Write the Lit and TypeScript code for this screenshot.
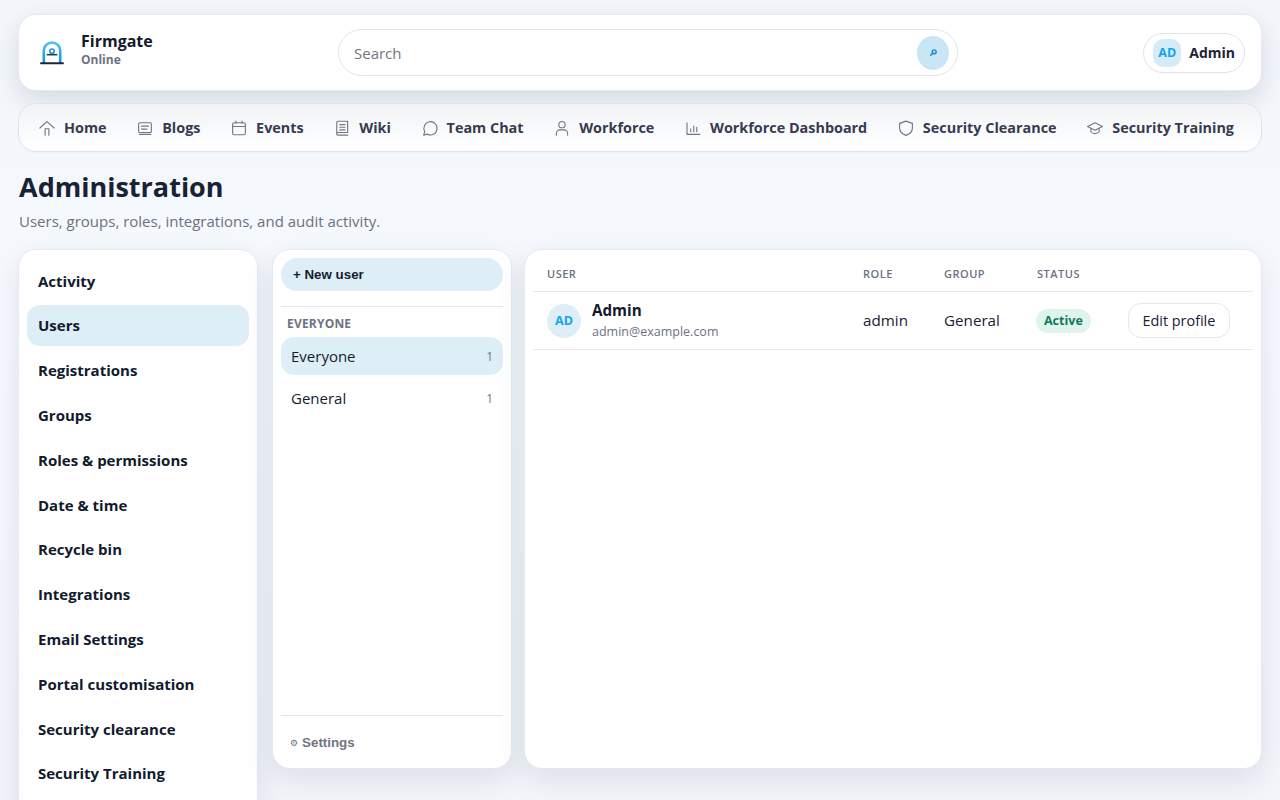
import { LitElement, html, css, svg } from "lit";
import { customElement } from "lit/decorators.js";

const ic = (p: unknown, sw = 1.5) => html`<svg class="ico" viewBox="0 0 24 24" fill="none" stroke="currentColor" stroke-width=${sw} stroke-linecap="round" stroke-linejoin="round">${p}</svg>`;

const navItems: [string, unknown][] = [
  ["Home", ic(svg`<path d="M2.500 12 12 3.500l9.500 8.500"/><path d="M9.500 21.500V13h5v8.500"/>`)],
  ["Blogs", ic(svg`<rect x="3.500" y="5" width="17" height="13" rx="1.500"/><path d="M7.500 9.500h9M7.500 13.500h7M4.500 20.500h15"/>`)],
  ["Events", ic(svg`<rect x="3.500" y="5" width="17" height="16" rx="2"/><path d="M3.500 10h17M8 2.800v3M16 2.800v3"/>`)],
  ["Wiki", ic(svg`<path d="M5 20V4.500A1.500 1.500 0 0 1 6.500 3H19.500v15H7A2 2 0 0 0 5 20a1.500 1.500 0 0 0 1.500 1.500h13"/><path d="M9 7.500h7M9 11h7M9 14.500h7"/>`)],
  ["Team Chat", ic(svg`<path d="M3.500 21.500l1.500-4.800A8.800 8.800 0 1 1 8.600 20.200Z"/>`)],
  ["Workforce", ic(svg`<circle cx="12" cy="7.500" r="4.200"/><path d="M4.500 21.500v-2a5 5 0 0 1 5-5h5a5 5 0 0 1 5 5v2"/>`)],
  ["Workforce Dashboard", ic(svg`<path d="M4 5v15.500h17"/><path d="M9 17v-3.500M13 17V9.500M17 17v-6"/>`)],
  ["Security Clearance", ic(svg`<path d="M12 2.800l8.500 3v6.500c0 4.500-3.500 7.700-8.500 9.500-5-1.800-8.500-5-8.500-9.500V5.800Z"/>`)],
  ["Security Training", ic(svg`<path d="M2 10 12 5l10 5-10 5Z"/><path d="M6.500 13v4c1.500 1.800 3.300 2.500 5.500 2.500s4-.7 5.500-2.500v-4"/>`)],
];

const sideItems = ["Activity", "Users", "Registrations", "Groups", "Roles & permissions", "Date & time", "Recycle bin", "Integrations", "Email Settings", "Portal customisation", "Security clearance", "Security Training"];

@customElement("app-root")
export class AppRoot extends LitElement {
  static styles = css`
    :host {
      display: block;
      height: 800px;
      overflow: hidden;
      box-sizing: border-box;
      padding: 14px 18px 0;
      font-family: "Open Sans", sans-serif;
      color: #151c2e;
      background: linear-gradient(180deg, #f2f6fb 0%, #f6f9fe 40%, #f2f5fa 100%);
    }
    * { box-sizing: border-box; }
    .card {
      background: #fff;
      border: 1px solid #e6e8ef;
      border-radius: 18px;
      box-shadow: 0 10px 30px rgba(24, 34, 60, 0.1);
    }
    .top {
      height: 77px;
      display: grid;
      grid-template-columns: 300px 620px 1fr;
      align-items: center;
      padding: 0 16px 0 19px;
      box-shadow: 0 10px 24px rgba(24, 34, 60, 0.13);
    }
    .brand { display: flex; align-items: center; gap: 15px; }
    .logo { width: 28px; height: 28px; flex: none; }
    .brand-text { padding-bottom: 5px; }
    .brand-name { font-size: 16px; font-weight: 700; line-height: 20px; color: #111a2e; }
    .brand-sub { font-size: 12px; font-weight: 700; line-height: 18px; color: #6d7283; }
    .search {
      height: 47px;
      border: 1px solid #e2e4ec;
      border-radius: 24px;
      display: flex;
      align-items: center;
      justify-content: space-between;
      padding: 0 8px 0 15px;
      font-size: 15px;
      color: #72757f;
    }
    .search-btn {
      width: 32px;
      height: 34px;
      border-radius: 50%;
      background: #c8e6f6;
      display: flex;
      align-items: center;
      justify-content: center;
    }
    .search-btn svg { width: 7px; height: 7px; }
    .user {
      justify-self: end;
      height: 40px;
      display: flex;
      align-items: center;
      gap: 8px;
      padding: 0 9px;
      border: 1px solid #e0e2ec;
      border-radius: 20px;
      font-size: 14px;
      font-weight: 700;
      color: #1c2338;
    }
    .user-av {
      width: 28px;
      height: 28px;
      border-radius: 10px;
      background: #d6ebf8;
      color: #12a4ec;
      font-size: 12.500px;
      font-weight: 700;
      display: flex;
      align-items: center;
      justify-content: center;
    }
    .nav {
      margin-top: 12px;
      height: 49px;
      display: flex;
      align-items: center;
      justify-content: space-between;
      padding: 0 27px 0 19px;
      border-radius: 18px;
      border: 1px solid #e0e3ea;
      background: linear-gradient(180deg, #f2f3f6 0%, #fbfcfd 70%, #fff 100%);
      box-shadow: 0 1px 2px rgba(24, 34, 60, 0.03);
      position: relative;
    }
    .nav-item {
      display: flex;
      align-items: center;
      gap: 8px;
      font-size: 14.400px;
      font-weight: 700;
      color: #363b50;
      white-space: nowrap;
    }
    .ico { width: 18px; height: 18px; color: #737784; flex: none; }
    h1 {
      margin: 16px 0 0 1px;
      font-size: 27px;
      line-height: 38px;
      font-weight: 700;
      color: #192234;
    }
    .subtitle {
      margin: 4px 0 0 1px;
      font-size: 15px;
      line-height: 22px;
      color: #6c7180;
    }
    .cols {
      margin-top: 17px;
      display: grid;
      grid-template-columns: 254px 252px 1fr;
      align-items: start;
    }
    .side {
      margin-right: 14px;
      padding: 9px 8px 8px;
      height: 580px;
      border-radius: 18px;
    }
    .side-item {
      height: 44.800px;
      display: flex;
      align-items: center;
      padding: 0 11px;
      border-radius: 13px;
      font-size: 15px;
      font-weight: 700;
      color: #111a2e;
    }
    .side-item.on { height: 41px; margin: 1px 0 2px; background: #deeef7; }
    .groups {
      margin-right: 12px;
      height: 520px;
      padding: 8px;
      display: flex;
      flex-direction: column;
    }
    .new-btn {
      height: 33px;
      border-radius: 17px;
      background: #deeef7;
      display: flex;
      align-items: center;
      padding: 0 12px;
      font-family: "Liberation Sans", sans-serif;
      font-size: 13.330px;
      font-weight: 700;
      color: #151c2e;
    }
    .sep { height: 1px; background: #e6e7ee; margin-top: 15px; flex: none; }
    .g-title {
      margin: 9px 0 0 6px;
      font-size: 12px;
      line-height: 16px;
      font-weight: 700;
      letter-spacing: 0.2px;
      color: #6d7283;
    }
    .g-row {
      display: flex;
      align-items: center;
      justify-content: space-between;
      height: 38px;
      padding: 0 10px;
      border-radius: 13px;
      font-size: 15px;
      color: #151c2e;
      margin-top: 5px;
    }
    .g-row.on { background: #deeef7; }
    .g-row + .g-row { margin-top: 4px; }
    .count { font-size: 12px; color: #71757f; }
    .spacer { flex: 1; }
    .settings {
      border-top: 1px solid #e6e7ee;
      height: 45px;
      flex: none;
      display: flex;
      align-items: center;
      padding: 9px 9px 0;
      gap: 4px;
      font-family: "Liberation Sans", sans-serif;
      font-size: 13.330px;
      font-weight: 700;
      color: #71757f;
    }
    .gear { font-family: "DejaVu Sans", sans-serif; font-size: 9px; font-weight: 400; }
    .main { height: 520px; padding: 0 8px; }
    .row {
      display: grid;
      grid-template-columns: 316px 81px 93px 91px 1fr;
      align-items: center;
      padding-left: 14px;
      border-bottom: 1px solid #e8e9ee;
    }
    .head {
      height: 42px;
      font-size: 11px;
      font-weight: 600;
      letter-spacing: 0.5px;
      color: #6d7283;
      padding-top: 6px;
    }
    .body { height: 58px; font-size: 15.200px; color: #1a2033; }
    .cell { padding-bottom: 2px; }
    .u { display: flex; align-items: center; gap: 11px; }
    .av {
      width: 34px;
      height: 34px;
      border-radius: 50%;
      background: #deeef7;
      color: #12a4ec;
      font-size: 12.500px;
      font-weight: 700;
      display: flex;
      align-items: center;
      justify-content: center;
    }
    .u-name { font-size: 15.200px; line-height: 21px; font-weight: 700; color: #111a2e; }
    .u-mail { font-size: 12.500px; line-height: 21px; color: #6d7283; }
    .pill {
      justify-self: start;
      height: 24px;
      margin-left: -1px;
      padding: 0 8px;
      border-radius: 12px;
      background: #dff4ec;
      color: #0f7a62;
      font-size: 12.500px;
      font-weight: 700;
      display: flex;
      align-items: center;
    }
    .edit {
      justify-self: start;
      height: 35px;
      margin-bottom: 1px;
      display: flex;
      align-items: center;
      padding: 0 13.500px;
      border: 1px solid #e6e7f0;
      border-radius: 13px;
      font-size: 14.400px;
      color: #1a2033;
    }
  `;

  render() {
    return html`
      <header class="card top">
        <div class="brand">
          <svg class="logo" viewBox="0 0 28 28" fill="none">
            <defs><linearGradient id="lg" x1="0" y1="0" x2="0" y2="1"><stop offset="0" stop-color="#4cc3ee"/><stop offset="1" stop-color="#0f94dc"/></linearGradient></defs>
            <path d="M5.800 24V11.700a8.200 8.200 0 0 1 16.400 0V24" stroke="url(#lg)" stroke-width="2.600"/>
            <circle cx="14" cy="12.200" r="2.200" stroke="#1496de" stroke-width="1.600"/>
            <path d="M8.700 15.700h10.600" stroke="#2a3347" stroke-width="1.500"/>
            <path d="M3 24.200h22" stroke="#1d2536" stroke-width="1.900" stroke-linecap="round"/>
          </svg>
          <div class="brand-text">
            <div class="brand-name">Firmgate</div>
            <div class="brand-sub">Online</div>
          </div>
        </div>
        <div class="search">
          <span>Search</span>
          <span class="search-btn">
            <svg viewBox="0 0 10 10" fill="none" stroke="#1187d4" stroke-width="2"><circle cx="6" cy="4" r="2.800"/><path d="M3.800 6.200 1 9" stroke-linecap="round"/></svg>
          </span>
        </div>
        <div class="user"><span class="user-av">AD</span><span>Admin</span></div>
      </header>

      <nav class="nav">
        ${navItems.map(([t, i]) => html`<div class="nav-item">${i}<span>${t}</span></div>`)}
      </nav>

      <h1>Administration</h1>
      <div class="subtitle">Users, groups, roles, integrations, and audit activity.</div>

      <div class="cols">
        <aside class="card side">
          ${sideItems.map((s) => html`<div class="side-item ${s === "Users" ? "on" : ""}">${s}</div>`)}
        </aside>

        <section class="card groups">
          <div class="new-btn">+ New user</div>
          <div class="sep"></div>
          <div class="g-title">EVERYONE</div>
          <div class="g-row on"><span>Everyone</span><span class="count">1</span></div>
          <div class="g-row"><span>General</span><span class="count">1</span></div>
          <div class="spacer"></div>
          <div class="settings"><span class="gear">⚙</span><span>Settings</span></div>
        </section>

        <section class="card main">
          <div class="row head"><span>USER</span><span>ROLE</span><span>GROUP</span><span>STATUS</span><span></span></div>
          <div class="row body">
            <div class="u">
              <span class="av">AD</span>
              <div>
                <div class="u-name">Admin</div>
                <div class="u-mail">admin@example.com</div>
              </div>
            </div>
            <span class="cell">admin</span>
            <span class="cell">General</span>
            <span class="pill">Active</span>
            <span class="edit">Edit profile</span>
          </div>
        </section>
      </div>
    `;
  }
}
